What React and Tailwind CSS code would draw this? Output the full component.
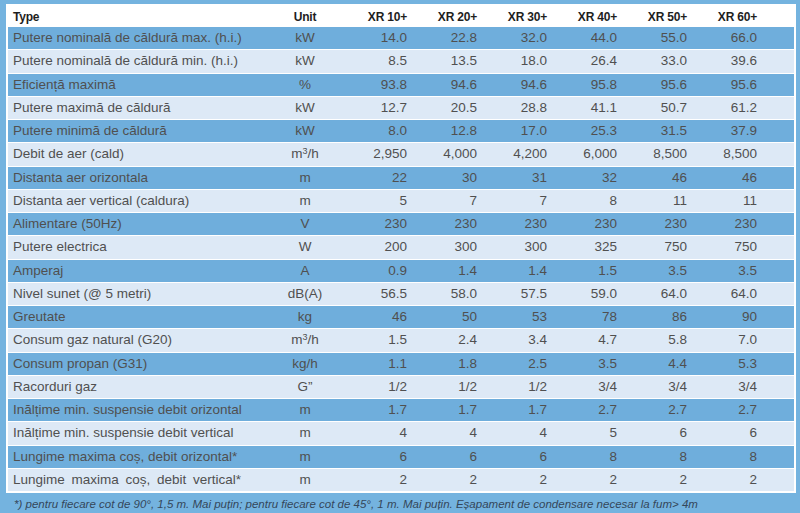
import React from "react";

const rows = [
  ["Putere nominală de căldură max. (h.i.)", "kW", ["14.0", "22.8", "32.0", "44.0", "55.0", "66.0"]],
  ["Putere nominală de căldură min. (h.i.)", "kW", ["8.5", "13.5", "18.0", "26.4", "33.0", "39.6"]],
  ["Eficiență maximă", "%", ["93.8", "94.6", "94.6", "95.8", "95.6", "95.6"]],
  ["Putere maximă de căldură", "kW", ["12.7", "20.5", "28.8", "41.1", "50.7", "61.2"]],
  ["Putere minimă de căldură", "kW", ["8.0", "12.8", "17.0", "25.3", "31.5", "37.9"]],
  ["Debit de aer (cald)", "m3/h", ["2,950", "4,000", "4,200", "6,000", "8,500", "8,500"]],
  ["Distanta aer orizontala", "m", ["22", "30", "31", "32", "46", "46"]],
  ["Distanta aer vertical (caldura)", "m", ["5", "7", "7", "8", "11", "11"]],
  ["Alimentare (50Hz)", "V", ["230", "230", "230", "230", "230", "230"]],
  ["Putere electrica", "W", ["200", "300", "300", "325", "750", "750"]],
  ["Amperaj", "A", ["0.9", "1.4", "1.4", "1.5", "3.5", "3.5"]],
  ["Nivel sunet (@ 5 metri)", "dB(A)", ["56.5", "58.0", "57.5", "59.0", "64.0", "64.0"]],
  ["Greutate", "kg", ["46", "50", "53", "78", "86", "90"]],
  ["Consum gaz natural (G20)", "m3/h", ["1.5", "2.4", "3.4", "4.7", "5.8", "7.0"]],
  ["Consum propan (G31)", "kg/h", ["1.1", "1.8", "2.5", "3.5", "4.4", "5.3"]],
  ["Racorduri gaz", "G”", ["1/2", "1/2", "1/2", "3/4", "3/4", "3/4"]],
  ["Inălțime min. suspensie debit orizontal", "m", ["1.7", "1.7", "1.7", "2.7", "2.7", "2.7"]],
  ["Inălțime min. suspensie debit vertical", "m", ["4", "4", "4", "5", "6", "6"]],
  ["Lungime maxima coș, debit orizontal*", "m", ["6", "6", "6", "8", "8", "8"]],
  ["Lungime maxima coș, debit vertical*", "m", ["2", "2", "2", "2", "2", "2"], true],
];

const models = ["XR 10+", "XR 20+", "XR 30+", "XR 40+", "XR 50+", "XR 60+"];

function Unit({ u }) {
  if (u === "m3/h") {
    return (
      <span>
        m<span className="text-[9px] relative -top-[4px]">3</span>/h
      </span>
    );
  }
  return <span>{u}</span>;
}

export default function App() {
  return (
    <div
      className="w-[800px] h-[513px] bg-[#74b3df] pt-[4px] overflow-hidden"
      style={{ fontFamily: '"Liberation Sans", Arial, sans-serif' }}
    >
      <div className="ml-[6px] w-[790px] border-2 border-white">
        <div className="grid grid-cols-[262px_70px_70px_70px_70px_70px_70px_70px_1fr] h-[21px] items-center bg-white text-[12px] font-bold text-[#1e1e1e] tracking-[-0.2px]">
          <div className="pl-[5px]">Type</div>
          <div className="text-center">Unit</div>
          {models.map((m) => (
            <div key={m} className="text-right pr-[3px]">
              {m}
            </div>
          ))}
          <div />
        </div>
        {rows.map(([label, unit, vals, wide], i) => (
          <div
            key={label}
            className={`grid grid-cols-[262px_70px_70px_70px_70px_70px_70px_70px_1fr] items-center text-[13.5px] text-[#505050] ${
              i % 2 === 0 ? "bg-[#6faedc]" : "bg-[#dde9f6]"
            } ${i === rows.length - 1 ? "h-[22.25px]" : "h-[23.25px] border-b border-white"}`}
          >
            <div className={`pl-[5px] whitespace-nowrap ${wide ? "[word-spacing:3px]" : ""}`}>{label}</div>
            <div className="text-center">
              <Unit u={unit} />
            </div>
            {vals.map((v, j) => (
              <div key={j} className="text-right pr-[3px]">
                {v}
              </div>
            ))}
            <div />
          </div>
        ))}
      </div>
      <div className="pl-[14px] pt-[3px] text-[11.5px] italic text-[#34475a] whitespace-nowrap">
        *) pentru fiecare cot de 90°, 1,5 m. Mai puțin; pentru fiecare cot de 45°, 1 m. Mai puțin. Eșapament de condensare necesar la fum&gt; 4m
      </div>
    </div>
  );
}
